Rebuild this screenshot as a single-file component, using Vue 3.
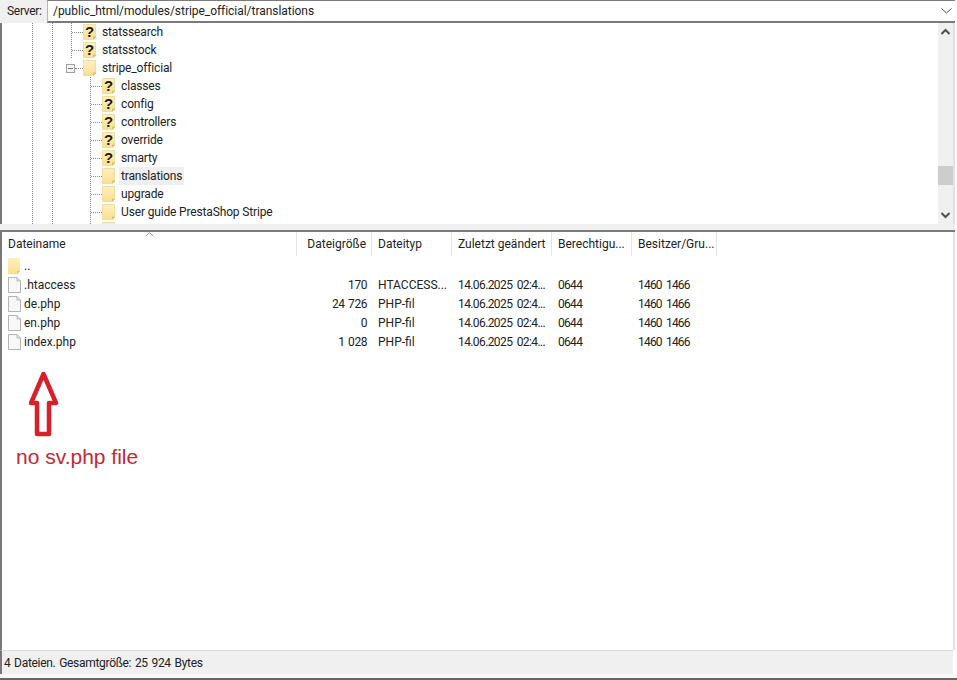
<script setup>
const treeRows = [
  { name: "statssearch", level: 1, unknown: true },
  { name: "statsstock", level: 1, unknown: true },
  { name: "stripe_official", level: 1, expanded: true },
  { name: "classes", level: 2, unknown: true },
  { name: "config", level: 2, unknown: true },
  { name: "controllers", level: 2, unknown: true },
  { name: "override", level: 2, unknown: true },
  { name: "smarty", level: 2, unknown: true },
  { name: "translations", level: 2, selected: true },
  { name: "upgrade", level: 2 },
  { name: "User guide PrestaShop Stripe", level: 2 },
];

const columns = [
  { label: "Dateiname", cls: "col-name" },
  { label: "Dateigröße", cls: "col-size" },
  { label: "Dateityp", cls: "col-type" },
  { label: "Zuletzt geändert", cls: "col-date" },
  { label: "Berechtigu...", cls: "col-perm" },
  { label: "Besitzer/Gru...", cls: "col-owner" },
];

const files = [
  { name: ".htaccess", size: "170", type: "HTACCESS..." },
  { name: "de.php", size: "24 726", type: "PHP-fil" },
  { name: "en.php", size: "0", type: "PHP-fil" },
  { name: "index.php", size: "1 028", type: "PHP-fil" },
];
</script>

<template>
  <div class="window">
    <svg class="defs" width="0" height="0">
      <defs>
        <linearGradient id="folderFill" x1="0" y1="0" x2="0" y2="1">
          <stop offset="0" stop-color="#fff0ba" />
          <stop offset="1" stop-color="#fadf94" />
        </linearGradient>
      </defs>
    </svg>

    <div class="server-bar">
      <span class="server-label">Server:</span>
      <div class="server-input">
        <span>/public_html/modules/stripe_official/translations</span>
        <svg class="combo-arrow" width="11" height="6" viewBox="0 0 11 6">
          <path d="M.5.5l5 4.5 5-4.5" fill="none" stroke="#555" stroke-width="1" />
        </svg>
      </div>
    </div>

    <div class="tree-pane">
      <div class="tree">
        <div
          v-for="row in treeRows"
          :key="row.name"
          class="tree-row"
          :class="row.level === 1 ? (row.expanded ? 'guides-open' : 'guides-one') : 'guides-two'"
        >
          <span v-if="row.expanded" class="expander"></span>
          <span class="connector" :class="[row.level === 1 ? 'conn-one' : 'conn-two', { 'conn-short': row.expanded }]"></span>
          <svg class="folder" width="13" height="16" viewBox="0 0 13 16">
            <path d="M.5.5h12v12.500l-3 2.500h-9z" fill="url(#folderFill)" stroke="#f2dc9c" />
            <path d="M13 12.500v1l-3 2.500v-3.500z" fill="#e5bf62" />
            <text v-if="row.unknown" x="6.500" y="13" text-anchor="middle" class="question">?</text>
          </svg>
          <span class="tree-label" :class="{ selected: row.selected }">{{ row.name }}</span>
        </div>
        <div class="tree-row guides-two clipped">
          <span class="connector conn-two hidden"></span>
          <svg class="folder" width="13" height="16" viewBox="0 0 13 16">
            <path d="M.5.5h12v15h-12z" fill="url(#folderFill)" stroke="#f2dc9c" />
          </svg>
        </div>
      </div>
      <div class="scrollbar">
        <svg width="15" height="17" viewBox="0 0 15 17">
          <path d="M3.500 11l4-4 4 4" fill="none" stroke="#505050" stroke-width="2" />
        </svg>
        <div class="scroll-track"><div class="scroll-thumb"></div></div>
        <svg width="15" height="17" viewBox="0 0 15 17">
          <path d="M3.500 6l4 4 4-4" fill="none" stroke="#505050" stroke-width="2" />
        </svg>
      </div>
    </div>

    <div class="splitter"></div>

    <div class="list-pane">
      <div class="list-head">
        <svg class="sort-arrow" width="9" height="5" viewBox="0 0 9 5">
          <path d="M.5 4.500l4-4 4 4" fill="none" stroke="#9a9a9a" />
        </svg>
        <div v-for="col in columns" :key="col.label" class="head-cell" :class="col.cls">{{ col.label }}</div>
      </div>

      <div class="list-body">
        <div class="file-row">
          <div class="col-name name-cell">
            <svg width="13" height="16" viewBox="0 0 13 16">
              <path d="M0 0h12v13l-3 3H0z" fill="url(#folderFill)" />
              <path d="M12 13l-3 3v-3z" fill="#e5bf62" />
            </svg>
            <span>..</span>
          </div>
        </div>
        <div v-for="file in files" :key="file.name" class="file-row">
          <div class="col-name name-cell">
            <svg width="13" height="16" viewBox="0 0 13 16">
              <path d="M.5.5h8.500l3.500 3.500v11.500h-12z" fill="#f8f8f8" stroke="#b4b4b4" />
              <path d="M9 .5v3.500h3.500" fill="none" stroke="#b4b4b4" />
            </svg>
            <span>{{ file.name }}</span>
          </div>
          <div class="col-size">{{ file.size }}</div>
          <div class="col-type">{{ file.type }}</div>
          <div class="col-date">14.06.2025 02:4...</div>
          <div class="col-perm">0644</div>
          <div class="col-owner">1460 1466</div>
        </div>
      </div>

      <div class="annotation">
        <svg width="34" height="68" viewBox="0 0 34 68">
          <path d="M14.500 4L27 33H20V64H8V33H2Z" fill="none" stroke="#d8202b" stroke-width="4.500" stroke-linejoin="round" />
        </svg>
        <div class="annotation-text">no sv.php file</div>
      </div>
    </div>

    <div class="status-bar">4 Dateien. Gesamtgröße: 25 924 Bytes</div>
    <div class="bottom-edge"></div>
  </div>
</template>

<style scoped>
.window {
  width: 957px;
  height: 680px;
  display: flex;
  flex-direction: column;
  overflow: hidden;
  background: #fff;
  color: #222;
  font-family: Roboto, "Noto Sans", sans-serif;
  font-size: 12px;
}

.defs {
  position: absolute;
}

.server-bar {
  height: 23px;
  width: 955px;
  flex: none;
  display: flex;
  background: #f0f0f0;
}

.server-label {
  width: 47px;
  padding-left: 7px;
  box-sizing: border-box;
  line-height: 22px;
  letter-spacing: -0.3px;
}

.server-input {
  flex: 1;
  display: flex;
  align-items: center;
  justify-content: space-between;
  padding: 0 3px 0 5px;
  background: #fff;
  border-top: 1px solid #7a7a7a;
  border-left: 1px solid #b5b5b5;
  border-bottom: 2px solid #7a7a7a;
  letter-spacing: -0.04px;
}

.tree-pane {
  height: 201px;
  width: 955px;
  flex: none;
  display: flex;
  box-sizing: border-box;
  border-left: 2px solid #777;
  border-right: 2px solid #e2e2e2;
}

.tree {
  flex: 1;
  overflow: hidden;
}

.tree-row {
  height: 18px;
  display: flex;
  align-items: center;
  background-repeat: no-repeat;
}

/* vertical dotted guides of the tree, x is relative to the pane */
.guides-one {
  --dots: repeating-linear-gradient(to bottom, #8a8a8a 0 1px, transparent 1px 2px);
  background-image: var(--dots), var(--dots), var(--dots);
  background-size: 1px 100%;
  background-position: 30px 0, 50px 0, 69px 0;
}

.guides-open {
  --dots: repeating-linear-gradient(to bottom, #8a8a8a 0 1px, transparent 1px 2px);
  background-image: var(--dots), var(--dots);
  background-size: 1px 100%;
  background-position: 30px 0, 50px 0;
}

.guides-two {
  --dots: repeating-linear-gradient(to bottom, #8a8a8a 0 1px, transparent 1px 2px);
  background-image: var(--dots), var(--dots), var(--dots);
  background-size: 1px 100%;
  background-position: 30px 0, 50px 0, 88px 0;
}

.expander {
  width: 9px;
  height: 9px;
  flex: none;
  margin-left: 64px;
  box-sizing: border-box;
  border: 1px solid #a0a0a0;
  background: linear-gradient(#777, #777) center / 5px 1px no-repeat, #f4f4f4;
}

.connector {
  height: 0;
  flex: none;
  border-bottom: 1px dotted #8a8a8a;
}

.conn-one {
  width: 11px;
  margin-left: 70px;
}

.conn-two {
  width: 11px;
  margin-left: 89px;
}

.conn-short {
  width: 8px;
  margin-left: 0;
}

.hidden {
  visibility: hidden;
}

.folder {
  flex: none;
}

.question {
  font-family: "Liberation Sans", sans-serif;
  font-size: 15px;
  font-weight: 700;
  fill: #1a1a1a;
}

.tree-label {
  margin-left: 4px;
  padding: 0 2px;
  line-height: 18px;
  letter-spacing: -0.15px;
}

.tree-label.selected {
  background: #efefef;
}

.scrollbar {
  width: 15px;
  flex: none;
  margin-right: 0;
  display: flex;
  flex-direction: column;
  background: #f0f0f0;
}

.scroll-track {
  flex: 1;
  padding-top: 126px;
}

.scroll-thumb {
  height: 19px;
  background: #cdcdcd;
}

.splitter {
  height: 8px;
  width: 955px;
  flex: none;
  box-sizing: border-box;
  background: #f0f0f0;
  border-bottom: 2px solid #7a7a7a;
}

.list-pane {
  position: relative;
  flex: 1;
  width: 955px;
  box-sizing: border-box;
  border-left: 2px solid #777;
  border-right: 2px solid #e2e2e2;
}

.list-head {
  position: relative;
  height: 24px;
  display: flex;
}

.sort-arrow {
  position: absolute;
  left: 143px;
  top: 0;
}

.head-cell {
  height: 24px;
  line-height: 24px;
  box-sizing: border-box;
  padding: 0 5px 0 6px;
  border-right: 1px solid #e5e5e5;
  white-space: nowrap;
  overflow: hidden;
}

.file-row {
  height: 19px;
  display: flex;
  align-items: center;
}

.col-name { width: 295px; }
.col-size { width: 75px; text-align: right; }
.col-type { width: 80px; }
.col-date { width: 100px; }
.col-perm { width: 80px; }
.col-owner { width: 85px; }

.file-row .col-size { padding-right: 5px; box-sizing: border-box; letter-spacing: -0.45px; word-spacing: 1px; }
.file-row .col-type,
.file-row .col-date,
.file-row .col-perm,
.file-row .col-owner { padding-left: 6px; box-sizing: border-box; white-space: nowrap; }
.file-row .col-date { letter-spacing: -0.6px; word-spacing: 2px; }
.file-row .col-perm { letter-spacing: -0.7px; }
.file-row .col-owner { letter-spacing: -0.8px; word-spacing: 2px; }

.head-cell.col-size { text-align: right; }

.name-cell {
  display: flex;
  align-items: center;
  gap: 3px;
  padding-left: 6px;
  box-sizing: border-box;
}

.annotation {
  position: absolute;
  left: 14px;
  top: 138px;
}

.annotation svg {
  display: block;
  margin-left: 13px;
}

.annotation-text {
  margin-top: 6px;
  font-family: "Liberation Sans", sans-serif;
  font-size: 21px;
  line-height: 26px;
  color: #bf2a32;
  white-space: nowrap;
}

.status-bar {
  height: 24px;
  width: 953px;
  flex: none;
  box-sizing: border-box;
  padding-left: 2px;
  line-height: 24px;
  background: #f0f0f0;
  border-top: 1px solid #dcdcdc;
  border-left: 2px solid #777;
  letter-spacing: -0.3px;
  word-spacing: 1px;
}

.bottom-edge {
  height: 6px;
  flex: none;
  box-sizing: border-box;
  background: #f8f8f8;
  border-bottom: 2px solid #666;
}
</style>
